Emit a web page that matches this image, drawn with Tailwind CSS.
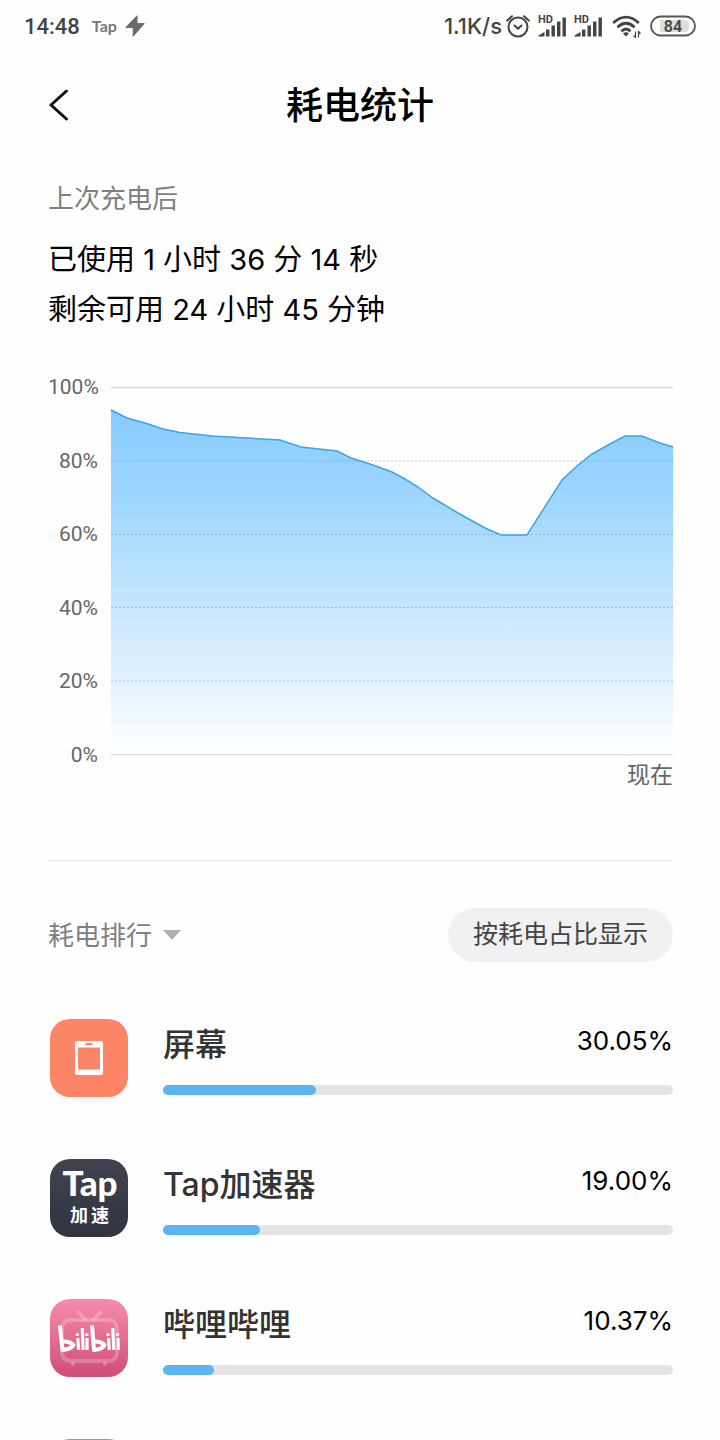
<!DOCTYPE html>
<html lang="zh-CN">
<head>
    <meta charset="UTF-8">
    <meta name="viewport" content="width=device-width, initial-scale=1.0">
    <title>耗电统计</title>
    <script src="https://cdn.jsdelivr.net/npm/@tailwindcss/browser@4"></script>
</head>
<body class="h-screen overflow-hidden bg-[#fefefe] font-['Inter','Noto_Sans_CJK_SC',sans-serif] text-black">

    <!-- Status bar -->
    <div class="flex h-[52px] items-center justify-between px-6 font-['Roboto',sans-serif] text-[#444]">
        <div class="flex items-center">
            <span class="text-[22px] font-medium">14:48</span>
            <span class="ml-3 font-['Lato',sans-serif] text-base font-bold text-[#777]">Tap</span>
            <svg class="ml-2 h-[22px] w-5" viewBox="0 0 20 22" fill="#6a6a6a" stroke="#6a6a6a" stroke-linejoin="round" aria-hidden="true">
                <path d="M12 .8 .9 12.400h7.300L8.200 21.200 19.200 8.600h-7.200z"/>
            </svg>
        </div>
        <div class="flex items-center">
            <span class="font-['Inter',sans-serif] text-[22px] font-medium">1.1K/s</span>
            <svg class="ml-1 h-6 w-6" viewBox="0 0 24 24" fill="none" stroke="#444" stroke-width="2" stroke-linecap="round" stroke-linejoin="round" aria-hidden="true">
                <circle cx="12" cy="13" r="9.5"/>
                <path d="M8.5 11.5 12 14.8l3.5-3.3M1.2 6.6 6 2.2M22.8 6.6 18 2.2"/>
            </svg>
            <svg class="ml-2 h-6 w-7" viewBox="0 0 28 24" fill="#444" aria-hidden="true">
                <text x="0" y="9" font-size="11" font-weight="700">HD</text>
                <path d="M.500 22.500v-1l6-3.500v4.500zM8 15.500h3.400v7h-3.400zM13.500 11.500h3.400v11h-3.400zM19 7.500h3.400v15h-3.400zM24.500 3.500h3.400v19h-3.400z"/>
            </svg>
            <svg class="ml-2 h-6 w-7" viewBox="0 0 28 24" fill="#444" aria-hidden="true">
                <text x="0" y="9" font-size="11" font-weight="700">HD</text>
                <path d="M.500 22.500v-1l6-3.500v4.500zM8 15.500h3.400v7h-3.400zM13.500 11.500h3.400v11h-3.400zM19 7.500h3.400v15h-3.400zM24.500 3.500h3.400v19h-3.400z"/>
            </svg>
            <svg class="ml-2.5 h-6 w-[30px]" viewBox="0 0 30 24" fill="none" stroke="#444" stroke-width="2.800" aria-hidden="true">
                <path d="M1.200 9Q14 -2.800 26.800 9M5.400 13.200Q14 5.200 22.600 13.200M9.400 17.200Q14 12.800 18.600 17.200"/>
                <path d="m14 22.600-3-3.200q3-2.400 6 0z" fill="#444" stroke="none"/>
                <path d="M23.500 17.500v6l-2-2M26.500 23.500v-6l2 2" stroke-width="1.200"/>
            </svg>
            <svg class="ml-2 h-[22px] w-[46px]" viewBox="0 0 46 22" aria-hidden="true">
                <rect x="1" y="1.500" width="44" height="19" rx="9.500" fill="none" stroke="#555" stroke-width="1.800"/>
                <path d="M10 5h25.500Q39 5 39 11t-3.500 6H10z" fill="#ddd"/>
                <text x="23" y="16.500" text-anchor="middle" font-size="16" font-weight="600" fill="#444">84</text>
            </svg>
        </div>
    </div>

    <!-- Title bar -->
    <header class="grid h-[107px] grid-cols-[40px_1fr_40px] items-center px-12">
        <button type="button" aria-label="返回">
            <svg class="h-8 w-6" viewBox="0 0 24 32" fill="none" stroke="#111" stroke-width="3" stroke-linecap="round" stroke-linejoin="round">
                <path d="M18.500 1 3 15l15.500 14"/>
            </svg>
        </button>
        <h1 class="text-center text-[37px] font-medium">耗电统计</h1>
    </header>

    <main class="pr-[47px] pl-12">
        <section class="pt-5">
            <h2 class="text-[26px] leading-10 text-[#808080]">上次充电后</h2>
            <p class="mt-4 text-[29px] leading-[50px]">已使用 1 小时 36 分 14 秒</p>
            <p class="text-[29px] leading-[50px]">剩余可用 24 小时 45 分钟</p>
        </section>

        <!-- Battery level chart -->
        <section class="mt-10 border-b border-[#e4e4e4] pb-[73px]">
            <div class="flex">
                <div class="flex h-[392px] w-[50px] flex-col justify-between text-right font-['Roboto',sans-serif] text-[21px] leading-6 whitespace-nowrap text-[#666]">
                    <span>100%</span>
                    <span>80%</span>
                    <span>60%</span>
                    <span>40%</span>
                    <span>20%</span>
                    <span>0%</span>
                </div>
                <div class="ml-[13px] h-[392px] flex-1 py-3">
                    <svg class="h-full w-full overflow-visible" viewBox="0 0 562 368" preserveAspectRatio="none" fill="none" role="img" aria-label="电量曲线">
                        <defs>
                            <linearGradient id="level" x1="0" y1="23" x2="0" y2="368" gradientUnits="userSpaceOnUse">
                                <stop offset="0" stop-color="#86cbff"/>
                                <stop offset=".25" stop-color="#9dd6ff"/>
                                <stop offset=".5" stop-color="#bde2fe"/>
                                <stop offset=".8" stop-color="#e3f3fe"/>
                                <stop offset="1" stop-color="#fefefe"/>
                            </linearGradient>
                        </defs>
                        <path d="M0 .500h562M0 367.500h562" stroke="#dcdcdc" stroke-width="1.500"/>
                        <path fill="url(#level)" d="M0 23 16 31 34 36 52 42 69 45.500 101 49 169 53 190 60 226 64 240 71 259 77 281 85 294 92 307 100 322 111 347 126 374 141 390 148H416L451 93 466 79 481 67 499 57 514 49H531L549 56 562 60V367H0z"/>
                        <path d="M0 74h562M0 147.500h562M0 220.500h562M0 294h562" stroke="#6b8ba8" stroke-opacity=".45" stroke-dasharray="2 2"/>
                        <path stroke="#3fa3e0" stroke-width="1.500" d="M0 23 16 31 34 36 52 42 69 45.500 101 49 169 53 190 60 226 64 240 71 259 77 281 85 294 92 307 100 322 111 347 126 374 141 390 148H416L451 93 466 79 481 67 499 57 514 49H531L549 56 562 60"/>
                    </svg>
                </div>
            </div>
            <p class="-mt-1 text-right text-[23px] leading-6 text-[#666]">现在</p>
        </section>

        <!-- Ranking -->
        <section>
            <div class="mt-[47px] flex h-[54px] items-center justify-between">
                <label class="flex items-center gap-2.5">
                    <select aria-label="排行类型" class="appearance-none bg-transparent text-[26px] text-[#808080]">
                        <option>耗电排行</option>
                    </select>
                    <svg class="h-2.5 w-[18px]" viewBox="0 0 18 10" fill="#b0b0b0" aria-hidden="true"><path d="M0 0h18L9 10z"/></svg>
                </label>
                <button type="button" class="h-full rounded-full bg-[#f1f1f1] px-[25px] text-[25px] text-[#444]">按耗电占比显示</button>
            </div>

            <ul class="mt-[57px] flex flex-col gap-[62px]">
                <li class="flex gap-[35px] pl-0.5">
                    <svg class="size-[78px] shrink-0 rounded-[20px] bg-[#fb8566]" viewBox="0 0 78 78" aria-hidden="true">
                        <path fill="#fff" fill-rule="evenodd" d="M27 22h24q2 0 2 2v30q0 2-2 2H27q-2 0-2-2V24q0-2 2-2zm1 6.500v22h22v-22zM35.500 24v2.200h7V24z"/>
                    </svg>
                    <div class="flex-1 pt-1">
                        <div class="flex items-start justify-between">
                            <h3 class="text-[32px] leading-11 font-medium text-[#333]">屏幕</h3>
                            <span class="text-[26px] leading-9">30.05%</span>
                        </div>
                        <div class="mt-[18px] h-2.5 rounded-full bg-[#e4e4e4]">
                            <div class="h-full rounded-full bg-[#5cb5f3]" style="width: 30%"></div>
                        </div>
                    </div>
                </li>
                <li class="flex gap-[35px] pl-0.5">
                    <svg class="size-[78px] shrink-0 rounded-[20px] bg-linear-to-b from-[#414450] to-[#303340]" viewBox="0 0 78 78" fill="#fff" text-anchor="middle" aria-hidden="true">
                        <text x="40" y="37" class="font-['Lato',sans-serif]" font-size="35" font-weight="900">Tap</text>
                        <text x="29" y="63" font-size="18" font-weight="700">加</text>
                        <text x="50" y="63" font-size="18" font-weight="700">速</text>
                    </svg>
                    <div class="flex-1 pt-1">
                        <div class="flex items-start justify-between">
                            <h3 class="text-[32px] leading-11 font-medium text-[#333]">Tap加速器</h3>
                            <span class="text-[26px] leading-9">19.00%</span>
                        </div>
                        <div class="mt-[18px] h-2.5 rounded-full bg-[#e4e4e4]">
                            <div class="h-full rounded-full bg-[#5cb5f3]" style="width: 19%"></div>
                        </div>
                    </div>
                </li>
                <li class="flex gap-[35px] pl-0.5">
                    <svg class="size-[78px] shrink-0 rounded-[20px] bg-linear-to-b from-[#f78bac] to-[#cf4d77]" viewBox="0 0 78 78" fill="none" aria-hidden="true">
                        <g stroke="#fff" stroke-opacity=".22" stroke-width="4" stroke-linecap="round">
                            <rect x="12" y="21" width="55" height="41" rx="8"/>
                            <path d="m28 13 7 7M51 13l-7 7M23 64v1M55 64v1" />
                        </g>
                        <!-- wordmark strokes -->
                        <g stroke="#fff" stroke-width="4" stroke-linejoin="round">
                            <path d="M9.800 26.500 12.500 51q9-1 11-5-4-4-10-3.500"/>
                            <path d="M42 26.500 44 51q9-1 10.500-5-4-4-10-3.500"/>
                        </g>
                        <g stroke="#fff" stroke-width="3.200">
                            <path d="M27.800 39l.800 12M32.300 29l.700 22M37 39v12"/>
                            <path d="M58.500 39l.800 12M62.800 29l1 22M68 39l.300 12"/>
                            <path d="M27.300 34.200v2.800M36.800 34.200v2.800M58 34.200v2.800M67.600 34.200v2.800"/>
                        </g>
                    </svg>
                    <div class="flex-1 pt-1">
                        <div class="flex items-start justify-between">
                            <h3 class="text-[32px] leading-11 font-medium text-[#333]">哔哩哔哩</h3>
                            <span class="text-[26px] leading-9">10.37%</span>
                        </div>
                        <div class="mt-[18px] h-2.5 rounded-full bg-[#e4e4e4]">
                            <div class="h-full rounded-full bg-[#5cb5f3]" style="width: 10%"></div>
                        </div>
                    </div>
                </li>
                <li class="flex gap-[35px] pl-0.5">
                    <div class="size-[78px] shrink-0 rounded-[20px] bg-[#5cc463]"></div>
                </li>
            </ul>
        </section>
    </main>

</body>
</html>
